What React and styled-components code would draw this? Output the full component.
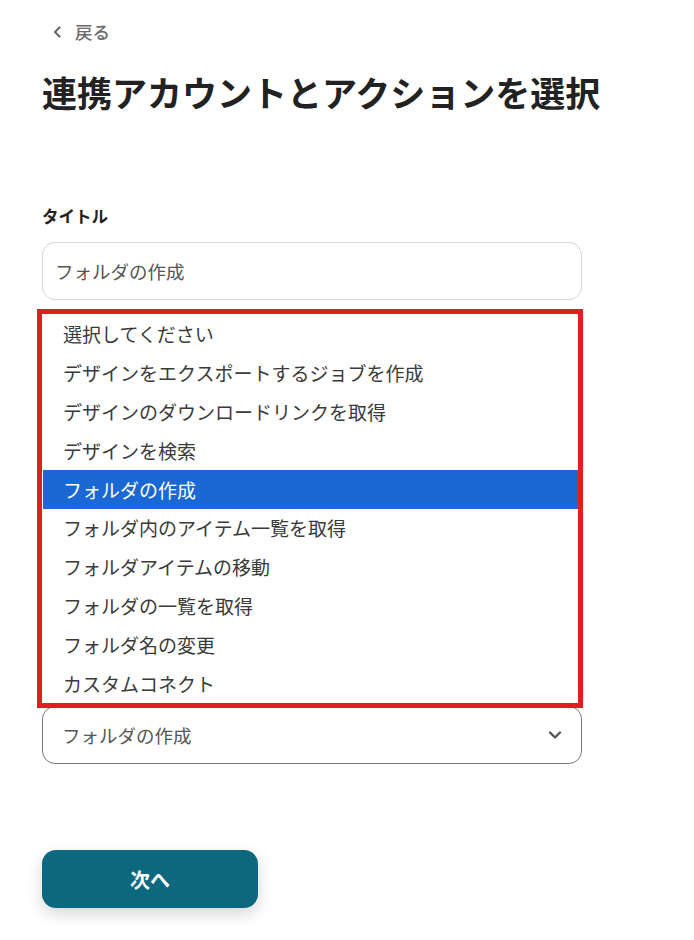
import React from "react";
import styled, { createGlobalStyle } from "styled-components";

const Global = createGlobalStyle`
  html, body { margin: 0; padding: 0; background: #fff; }
  body { font-family: "Noto Sans CJK JP", "Noto Sans", sans-serif; color: #333; }
`;

const Page = styled.div`
  width: 694px;
  height: 940px;
  box-sizing: border-box;
  padding: 20px 0 0 42px;
  display: flex;
  flex-direction: column;
  align-items: flex-start;
`;

const Back = styled.a`
  display: flex;
  align-items: center;
  gap: 12px;
  margin-left: 10px;
  font-size: 17.5px;
  line-height: 24px;
  font-weight: 500;
  color: #6b6b6b;
  text-decoration: none;
`;

const Title = styled.h1`
  margin: 23px 0 0 0;
  font-size: 35px;
  line-height: 50px;
  font-weight: 700;
  color: #222;
  letter-spacing: 0;
`;

const Label = styled.div`
  margin-top: 87px;
  font-size: 16.5px;
  line-height: 24px;
  font-weight: 700;
  color: #222;
`;

const Input = styled.div`
  margin-top: 14px;
  width: 540px;
  height: 58px;
  box-sizing: border-box;
  border: 1px solid #d3d6db;
  border-radius: 13px;
  display: flex;
  align-items: center;
  padding-left: 12px;
  font-size: 18.5px;
  color: #555;
`;

const SelectWrap = styled.div`
  position: relative;
  margin-top: 406px;
  width: 540px;
`;

const Select = styled.div`
  height: 58px;
  box-sizing: border-box;
  border: 1px solid #7a7a7a;
  border-radius: 13px;
  display: flex;
  align-items: center;
  justify-content: space-between;
  padding: 0 19px 0 19px;
  font-size: 18.5px;
  color: #555;
`;

const Popup = styled.ul`
  position: absolute;
  left: -5px;
  bottom: calc(100% - 2px);
  width: 546px;
  box-sizing: border-box;
  margin: 0;
  padding: 0 0 0 1px;
  list-style: none;
  background: #fff;
  border: 5px solid #e41d1f;
`;

const Option = styled.li`
  height: 38.9px;
  display: flex;
  align-items: center;
  padding-left: 20px;
  font-size: 19px;
  color: ${(p) => (p.$active ? "#fff" : "#3a3a3a")};
  background: ${(p) => (p.$active ? "#1a68d3" : "transparent")};
`;

const NextButton = styled.button`
  margin-top: 86px;
  width: 216px;
  height: 58px;
  border: none;
  border-radius: 14px;
  background: #0b687f;
  color: #fff;
  font-family: inherit;
  font-size: 20px;
  font-weight: 700;
  box-shadow: 0 6px 16px rgba(0, 0, 0, 0.16);
`;

const options = [
  "選択してください",
  "デザインをエクスポートするジョブを作成",
  "デザインのダウンロードリンクを取得",
  "デザインを検索",
  "フォルダの作成",
  "フォルダ内のアイテム一覧を取得",
  "フォルダアイテムの移動",
  "フォルダの一覧を取得",
  "フォルダ名の変更",
  "カスタムコネクト",
];

export default function App() {
  return (
    <>
      <Global />
      <Page>
        <Back href="#">
          <svg width="11" height="12" viewBox="0 0 11 12" fill="none">
            <path d="M7.5 1.5 L3 6 L7.5 10.5" stroke="#6b6b6b" strokeWidth="2.2" strokeLinecap="round" strokeLinejoin="round" />
          </svg>
          戻る
        </Back>
        <Title>連携アカウントとアクションを選択</Title>
        <Label>タイトル</Label>
        <Input>フォルダの作成</Input>
        <SelectWrap>
          <Select>
            フォルダの作成
            <svg width="14" height="10" viewBox="0 0 14 10" fill="none">
              <path d="M2 2.5 L7 7.5 L12 2.5" stroke="#555" strokeWidth="2.4" strokeLinecap="round" strokeLinejoin="round" />
            </svg>
          </Select>
          <Popup>
            {options.map((o, i) => (
              <Option key={i} $active={i === 4}>{o}</Option>
            ))}
          </Popup>
        </SelectWrap>
        <NextButton>次へ</NextButton>
      </Page>
    </>
  );
}
